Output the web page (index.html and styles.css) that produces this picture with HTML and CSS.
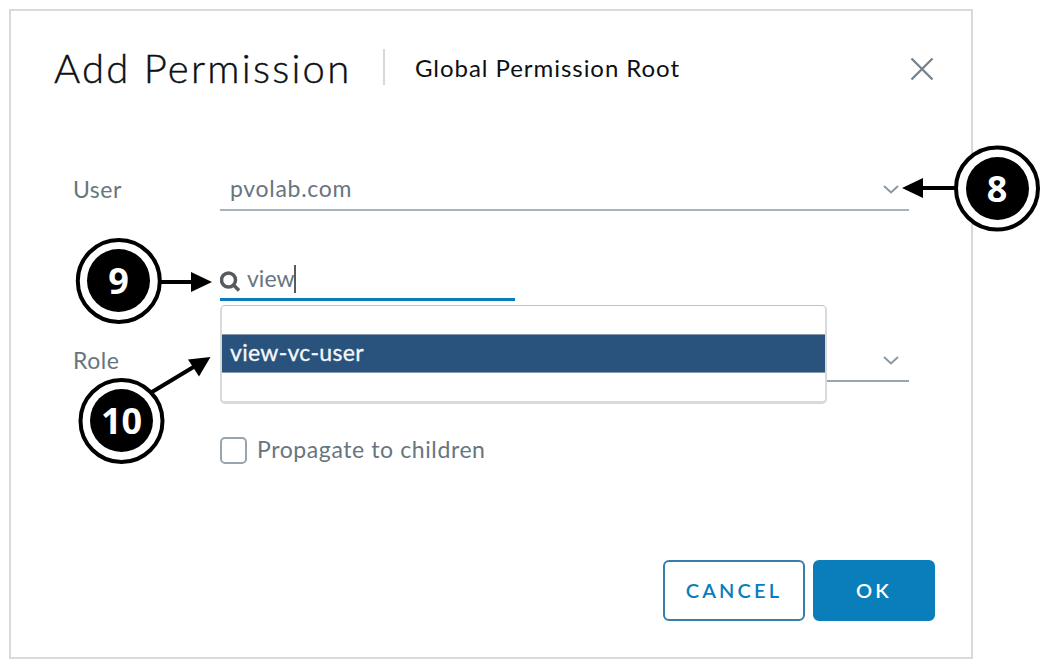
FILE: index.html
```html
<!DOCTYPE html>
<html lang="en">
<head>
<meta charset="utf-8">
<title>Add Permission</title>
<link rel="stylesheet" href="styles.css">
</head>
<body>
<main class="dialog">
  <header class="header">
    <h1 class="title">Add Permission</h1>
    <span class="divider"></span>
    <span class="subtitle">Global Permission Root</span>
    <svg class="close" width="26" height="26" viewBox="0 0 26 26"><path d="M2.5 2.5 23.500 23.500M23.500 2.500 2.500 23.500"/></svg>
  </header>
  <form class="form">
    <div class="row row-user">
      <label class="label"><span class="t-user">User</span></label>
      <div class="select"><span class="t-domain">pvolab.com</span>
        <svg class="chevron" width="18" height="12" viewBox="0 0 18 12"><path d="M2 3 9 9.500 16 3"/></svg>
      </div>
    </div>
    <div class="row row-search">
      <div class="search">
        <svg class="magnifier" width="22" height="22" viewBox="0 0 22 22"><circle cx="8.500" cy="9" r="7"/><path d="m13.500 14 5.500 5.500"/></svg>
        <span class="t-view">view</span><span class="caret"></span>
        <div class="suggestions"><div class="option"><span class="t-option">view-vc-user</span></div></div>
      </div>
    </div>
    <div class="row row-role">
      <label class="label"><span class="t-role">Role</span></label>
      <div class="select">
        <svg class="chevron" width="18" height="12" viewBox="0 0 18 12"><path d="M2 3 9 9.500 16 3"/></svg>
      </div>
    </div>
    <div class="row row-check">
      <span class="checkbox"></span><span class="t-propagate">Propagate to children</span>
    </div>
  </form>
  <footer class="footer">
    <button class="button cancel" type="button"><span class="t-cancel">CANCEL</span></button>
    <button class="button ok" type="button"><span class="t-ok">OK</span></button>
  </footer>
</main>
<svg class="callouts" width="1047" height="672" viewBox="0 0 1047 672">
  <g class="arrow">
    <path d="M956 188H920"/><path class="head" d="M902 188 923 178V198Z"/>
    <path d="M160 282H195"/><path class="head" d="M212 282 191 272V292Z"/>
    <path d="M152 392 196 365.500"/><path class="head" d="M210.500 357 188 359.500 199 376.500Z"/>
  </g>
  <g class="badge">
    <circle class="ring" cx="997" cy="188.500" r="41"/><circle class="disc" cx="997.500" cy="188.500" r="31.500"/><text x="997" y="202">8</text>
    <circle class="ring" cx="118.800" cy="281" r="41"/><circle class="disc" cx="118.500" cy="280.500" r="31.500"/><text x="118.500" y="294">9</text>
    <circle class="ring" cx="121.500" cy="421" r="41"/><circle class="disc" cx="121.500" cy="420.500" r="31.500"/><text x="121.500" y="434">10</text>
  </g>
</svg>
</body>
</html>
```
FILE: styles.css
```css
* { box-sizing: border-box; }
body { margin: 0; height: 672px; padding: 9px; background: #fff; overflow: hidden; font-family: Lato, sans-serif; font-size: 23px; color: #67757f; }
.dialog { width: 964px; height: 650px; border: 2px solid #d9d9d9; background: #fff; display: flex; flex-direction: column; }
.header { height: 116px; padding: 0 36px 0 43px; display: flex; align-items: center; }
.title { margin: 0; padding-bottom: 3px; width: 329px; font-size: 40px; font-weight: 300; color: #0c1013; letter-spacing: 2.25px; white-space: nowrap; -webkit-text-stroke: .4px #0c1013; }
.divider { width: 2px; height: 36px; margin-bottom: 4px; background: #d9d9d9; }
.subtitle { margin-left: 30px; padding-bottom: 4px; font-size: 24px; color: #0c1013; letter-spacing: .95px; white-space: nowrap; }
.close { margin-left: auto; fill: none; stroke: #75828c; stroke-width: 2.3; }
.form { flex: 1; }
.row { display: flex; align-items: stretch; padding-left: 62px; white-space: nowrap; }
.label { width: 147px; padding-bottom: 2px; display: flex; align-items: center; }
.select { width: 689px; padding: 0 9px 0 10px; border-bottom: 2px solid #a8b3bd; display: flex; align-items: center; justify-content: space-between; }
.chevron { margin-left: auto; fill: none; stroke: #8b98a2; stroke-width: 2; }
.row-user { height: 43px; margin-top: 41px; }
.row-search { height: 42px; margin-top: 48px; padding-left: 209px; }
.search { position: relative; width: 295px; border-bottom: 3px solid #0a7ebb; display: flex; align-items: center; }
.magnifier { margin-top: 6px; fill: none; stroke: #565b5f; stroke-width: 3.5; }
.t-view { margin-left: 5px; padding-bottom: 2px; }
.caret { width: 2px; height: 28px; background: #565b5f; }
.suggestions { position: absolute; z-index: 1; left: 0; top: 46px; width: 607px; height: 99px; padding: 28px 0 0; border: 2px solid #d7d9db; border-top: 1px solid #bfc4c8; border-bottom-width: 3px; border-radius: 5px; background: #fff; }
.option { height: 39px; padding: 0 8px 3px; display: flex; align-items: center; background: #29527d; color: #f4f7fa; border: 1px solid #8799aa; border-width: 1px 0; }
.row-role { height: 43px; margin-top: 38px; }
.row-role .select { border-color: #98a5af; }
.row-check { height: 27px; margin-top: 55px; padding-left: 209px; align-items: center; }
.checkbox { width: 27px; height: 27px; border: 2px solid #98a5af; border-radius: 5px; }
.t-propagate { margin-left: 10px; padding-bottom: 3px; letter-spacing: .6px; }
.footer { height: 97px; padding-right: 36px; display: flex; justify-content: flex-end; gap: 8px; }
.button { height: 61px; padding: 0 0 2px; border: 2px solid #337faa; border-radius: 6px; font: 600 20px Lato, sans-serif; letter-spacing: 3.2px; }
.cancel { width: 142px; background: #fff; color: #0a7ebb; }
.ok { width: 122px; background: #0a7ebb; border-color: #0a7ebb; color: #fff; }
.t-user, .t-role { letter-spacing: .5px; }
.t-domain { letter-spacing: .7px; padding-bottom: 1px; }
.t-option { letter-spacing: .3px; -webkit-text-stroke: .3px #f4f7fa; }
.callouts { position: absolute; left: 0; top: 0; z-index: 2; pointer-events: none; }
.arrow { fill: none; stroke: #000; stroke-width: 4; }
.head { fill: #000; stroke: none; }
.ring { fill: #fff; stroke: #000; stroke-width: 4; }
.disc { fill: #000; }
.badge text { fill: #fff; font: 700 36px "Open Sans", sans-serif; text-anchor: middle; }
```
